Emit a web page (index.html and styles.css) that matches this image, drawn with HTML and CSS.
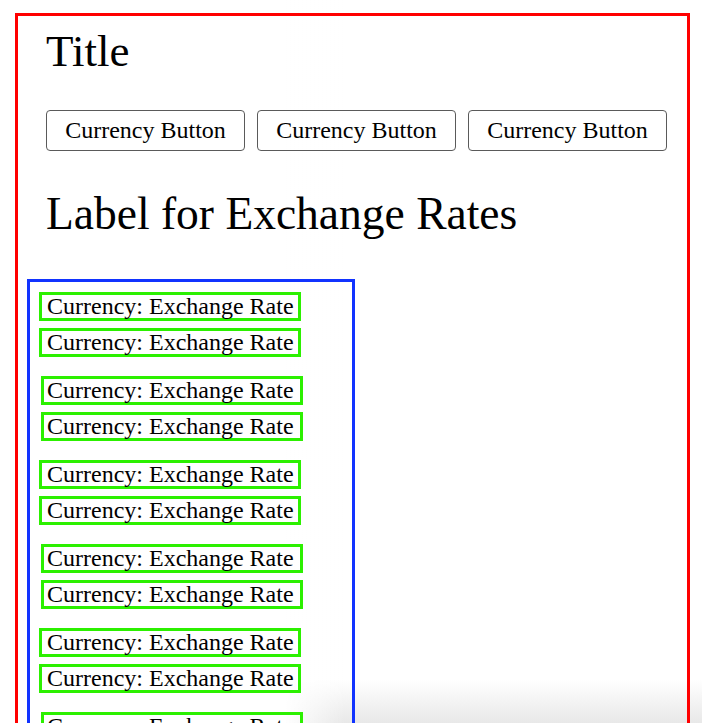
FILE: index.html
```html
<!DOCTYPE html>
<html lang="en">
<head>
<meta charset="utf-8">
<title>Exchange Rates</title>
<link rel="stylesheet" href="styles.css">
</head>
<body>
<div class="frame">
  <h1 class="title">Title</h1>
  <div class="buttons">
    <button class="currency-btn">Currency Button</button>
    <button class="currency-btn">Currency Button</button>
    <button class="currency-btn">Currency Button</button>
  </div>
  <h2 class="label">Label for Exchange Rates</h2>
  <div class="rates">
    <div class="pair">
      <div class="rate">Currency: Exchange Rate</div>
      <div class="rate">Currency: Exchange Rate</div>
    </div>
    <div class="pair pair-shift">
      <div class="rate">Currency: Exchange Rate</div>
      <div class="rate">Currency: Exchange Rate</div>
    </div>
    <div class="pair">
      <div class="rate">Currency: Exchange Rate</div>
      <div class="rate">Currency: Exchange Rate</div>
    </div>
    <div class="pair pair-shift">
      <div class="rate">Currency: Exchange Rate</div>
      <div class="rate">Currency: Exchange Rate</div>
    </div>
    <div class="pair">
      <div class="rate">Currency: Exchange Rate</div>
      <div class="rate">Currency: Exchange Rate</div>
    </div>
    <div class="pair pair-shift">
      <div class="rate">Currency: Exchange Rate</div>
      <div class="rate">Currency: Exchange Rate</div>
    </div>
    <div class="pair">
      <div class="rate">Currency: Exchange Rate</div>
      <div class="rate">Currency: Exchange Rate</div>
    </div>
  </div>
</div>
</body>
</html>
```

FILE: styles.css
```css
html {
  height: 100%;
  background:
    linear-gradient(to right, #ffffff 285px, rgba(255,255,255,0) 345px),
    linear-gradient(to bottom, #ffffff 94%, #e8e8e8 100%);
}

body {
  margin: 0;
  font-family: "Liberation Serif", "Times New Roman", serif;
  color: #000;
}

.frame {
  margin: 13px 12px 0 15px;
  border: 3px solid #ff0000;
  padding: 13px 0 40px 0;
  display: flex;
  flex-direction: column;
}

.title {
  margin: 0 0 0 28px;
  font-size: 45px;
  font-weight: normal;
  line-height: 45px;
}

.buttons {
  display: flex;
  gap: 12px;
  margin: 36px 0 0 28px;
}

.currency-btn {
  width: 199px;
  height: 41px;
  border: 1px solid #5a5a5a;
  border-radius: 4px;
  background: transparent;
  font-family: "Liberation Serif", "Times New Roman", serif;
  font-size: 24px;
  color: #000;
  padding: 0;
  display: flex;
  align-items: center;
  justify-content: center;
}

.label {
  margin: 40px 0 0 28px;
  font-size: 45.5px;
  font-weight: normal;
  line-height: 45px;
}

.rates {
  margin: 43px 0 0 9px;
  width: 322px;
  border: 3px solid #1133ff;
  padding: 10px 0 20px 0;
  display: flex;
  flex-direction: column;
  gap: 19px;
}

.pair {
  display: flex;
  flex-direction: column;
  gap: 7px;
  margin-left: 9px;
}

.pair-shift {
  margin-left: 11px;
}

.rate {
  box-sizing: content-box;
  border: 3px solid #2cf000;
  padding: 0 0 0 5px;
  width: 251px;
  font-size: 24px;
  line-height: 22px;
  height: 23px;
  white-space: nowrap;
}

.pair-shift .rate {
  padding-left: 3px;
  width: 253px;
}
```
